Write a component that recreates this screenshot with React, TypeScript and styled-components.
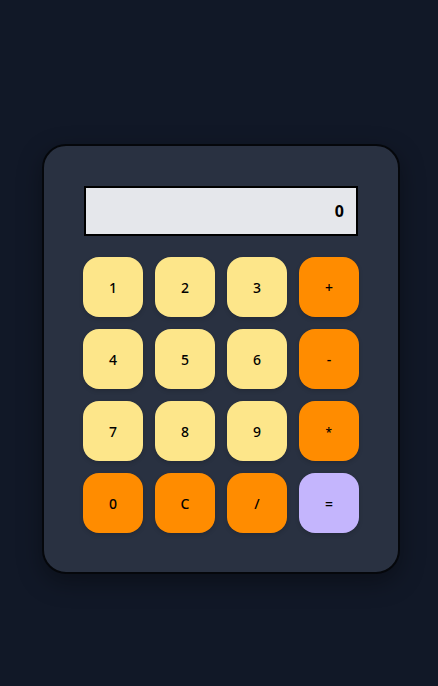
import React, { useState } from "react";
import styled, { createGlobalStyle } from "styled-components";

const Global = createGlobalStyle`
  html, body { margin: 0; padding: 0; background: #111827; }
  body { font-family: "Noto Sans", "Open Sans", sans-serif; }
`;

const Page = styled.div`
  min-height: 686px;
  box-sizing: border-box;
  padding: 144px 0 0 42px;
`;

const Card = styled.div`
  width: 358px;
  box-sizing: border-box;
  padding: 40px 39px 39px;
  background: #293141;
  border: 2px solid #05070b;
  border-radius: 24px;
  box-shadow: 0 8px 24px rgba(0, 0, 0, 0.35);
  display: flex;
  flex-direction: column;
  gap: 21px;
`;

const Display = styled.div`
  height: 50px;
  margin: 0 1px;
  box-sizing: border-box;
  border: 2px solid #000;
  background: #e5e7eb;
  display: flex;
  align-items: center;
  justify-content: flex-end;
  padding: 0 12px;
  font-size: 16px;
  font-weight: 700;
  color: #000;
`;

const Grid = styled.div`
  display: grid;
  grid-template-columns: repeat(4, 60px);
  grid-auto-rows: 60px;
  gap: 12px;
`;

type Kind = "num" | "op" | "eq";
const bg: Record<Kind, string> = { num: "#fde68a", op: "#ff8c00", eq: "#c4b5fd" };

const Key = styled.button<{ $kind: Kind }>`
  border: none;
  border-radius: 16px;
  background: ${(p) => bg[p.$kind]};
  color: #000;
  font-family: "Noto Sans", "Open Sans", sans-serif;
  font-size: 14px;
  font-weight: 500;
  padding: 0;
  cursor: pointer;
  box-shadow: 0 2px 4px rgba(0, 0, 0, 0.15);
`;

const Glyph = styled.span<{ $low?: boolean }>`
  display: inline-block;
  transform: ${(p) => (p.$low ? "translateY(1px) scale(0.85)" : "none")};
`;

const keys: [string, Kind][] = [
  ["1", "num"], ["2", "num"], ["3", "num"], ["+", "op"],
  ["4", "num"], ["5", "num"], ["6", "num"], ["-", "op"],
  ["7", "num"], ["8", "num"], ["9", "num"], ["*", "op"],
  ["0", "op"], ["C", "op"], ["/", "op"], ["=", "eq"],
];

export default function App() {
  const [value, setValue] = useState("0");
  const press = (k: string) => {
    if (k === "C") return setValue("0");
    if (k === "=") {
      try {
        // eslint-disable-next-line no-new-func
        const r = Function(`return (${value})`)();
        setValue(String(r));
      } catch {
        setValue("0");
      }
      return;
    }
    setValue((v) => (v === "0" ? k : v + k));
  };
  return (
    <>
      <Global />
      <Page>
        <Card>
          <Display>{value}</Display>
          <Grid>
            {keys.map(([k, kind]) => (
              <Key key={k} $kind={kind} onClick={() => press(k)}>
                <Glyph $low={k === "*"}>{k}</Glyph>
              </Key>
            ))}
          </Grid>
        </Card>
      </Page>
    </>
  );
}
